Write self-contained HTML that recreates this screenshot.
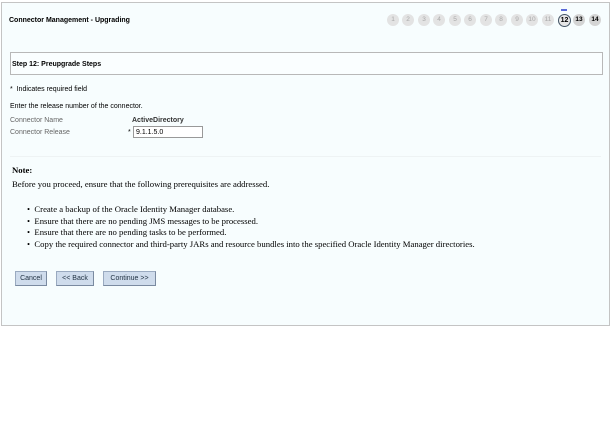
<!DOCTYPE html>
<html><head><style>
body{margin:0;width:612px;height:427px;background:#fff;position:relative;font-family:"Liberation Sans",Tahoma,sans-serif;overflow:hidden}
.p{position:absolute;left:1px;top:2px;width:607px;height:322px;border:1px solid #c4c4c4;background:#f7fdfe}
.a{position:absolute;white-space:nowrap}
.s{font-size:7px;color:#000}
.g{color:#666}
.c{position:absolute;top:14px;width:12px;height:12px;border-radius:50%;background:#e3e3e3;color:#a8a8a8;font-size:6.5px;text-align:center;line-height:12px}
.serif{font-family:"Liberation Serif",serif;font-size:8.7px}
.btn{position:absolute;top:271px;height:13px;background:#cfdcec;border:1px solid #9aaac0;border-right-color:#7a8aa0;border-bottom-color:#7a8aa0;font-size:7px;line-height:13px;text-align:center;color:#234}
</style></head><body>
<div class="p"></div>
<div class="a s" style="left:9px;top:17px;font-weight:bold">Connector Management - Upgrading</div>
<div class="c" style="left:387px">1</div><div class="c" style="left:402px">2</div><div class="c" style="left:418px">3</div><div class="c" style="left:433px">4</div><div class="c" style="left:449px">5</div><div class="c" style="left:464px">6</div><div class="c" style="left:480px">7</div><div class="c" style="left:495px">8</div><div class="c" style="left:511px">9</div><div class="c" style="left:526px">10</div><div class="c" style="left:542px">11</div>
<div class="c" style="left:558px;background:#e6e6e6;border:1px solid #456;width:11px;height:11px;line-height:11px;top:14px;color:#000;font-weight:bold;font-size:7px">12</div>
<div class="a" style="left:561px;top:9px;width:6px;height:2px;background:#5a6ad8"></div>
<div class="c" style="left:573px;background:#d4d4d4;color:#000;font-weight:bold">13</div>
<div class="c" style="left:589px;background:#d4d4d4;color:#000;font-weight:bold">14</div>
<div class="a" style="left:10px;top:52px;width:591px;height:21px;border:1px solid #b8b8b8;background:#fafeff"></div>
<div class="a s" style="left:12px;top:61px;font-weight:bold">Step 12: Preupgrade Steps</div>
<div class="a s" style="left:10px;top:86px">*&nbsp; Indicates required field</div>
<div class="a s" style="left:10px;top:103px">Enter the release number of the connector.</div>
<div class="a s g" style="left:10px;top:117px">Connector Name</div>
<div class="a s" style="left:132px;top:117px;font-weight:bold;color:#333">ActiveDirectory</div>
<div class="a s g" style="left:10px;top:129px">Connector Release</div>
<div class="a s" style="left:128px;top:129px">*</div>
<div class="a s" style="left:133px;top:126px;border:1px solid #999;background:#fff;line-height:11px;padding-left:2px;box-sizing:border-box;width:70px;height:12px">9.1.1.5.0</div>
<div class="a" style="left:10px;top:156px;width:591px;height:1px;background:#eef3f4"></div>
<div class="a serif" style="left:12px;top:165px;font-weight:bold">Note:</div>
<div class="a serif" style="left:12px;top:179px">Before you proceed, ensure that the following prerequisites are addressed.</div>
<div class="a serif" style="left:27px;top:204px;line-height:11.5px">• &nbsp;Create a backup of the Oracle Identity Manager database.<br>• &nbsp;Ensure that there are no pending JMS messages to be processed.<br>• &nbsp;Ensure that there are no pending tasks to be performed.<br>• &nbsp;Copy the required connector and third-party JARs and resource bundles into the specified Oracle Identity Manager directories.</div>
<div class="btn" style="left:15px;width:30px">Cancel</div>
<div class="btn" style="left:56px;width:36px">&lt;&lt; Back</div>
<div class="btn" style="left:103px;width:51px">Continue &gt;&gt;</div>
</body></html>
